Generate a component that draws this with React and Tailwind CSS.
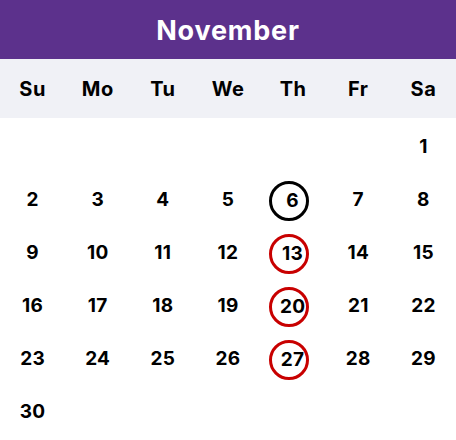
import React from 'react';

const days = ['Su', 'Mo', 'Tu', 'We', 'Th', 'Fr', 'Sa'];

const weeks = [
  [null, null, null, null, null, null, 1],
  [2, 3, 4, 5, 6, 7, 8],
  [9, 10, 11, 12, 13, 14, 15],
  [16, 17, 18, 19, 20, 21, 22],
  [23, 24, 25, 26, 27, 28, 29],
  [30, null, null, null, null, null, null],
];

const today = 6;
const marked = [13, 20, 27];

const DayCell = ({ day }) => {
  if (!day) return <div className="h-[53px]" />;

  if (day === today || marked.includes(day)) {
    const ring = day === today ? 'border-black' : 'border-[#c80000]';
    return (
      <div className="h-[53px] flex items-center justify-center">
        <div className={`w-[40px] h-[40px] -ml-[8px] rounded-full border-[3px] ${ring} flex items-center justify-center pl-[7px] pt-px`}>
          {day}
        </div>
      </div>
    );
  }

  return <div className="h-[53px] flex items-center justify-center">{day}</div>;
};

export default function App() {
  return (
    <div className="w-[456px] h-[440px] bg-white font-['Inter',sans-serif] font-bold text-black">
      {/* Month */}
      <div className="h-[59px] bg-[#5c318c] flex items-center justify-center pt-[4px]">
        <span className="text-white text-[27px] tracking-[0.8px]">November</span>
      </div>

      {/* Weekday names */}
      <div className="h-[59px] bg-[#f0f1f6] grid grid-cols-7 items-center">
        {days.map((d) => (
          <div key={d} className="text-center text-[20px] pt-[1px] tracking-[0.5px]">{d}</div>
        ))}
      </div>

      {/* Dates */}
      <div className="pt-[3px] text-[19px] tracking-[0.3px]">
        {weeks.map((week, i) => (
          <div key={i} className="grid grid-cols-7">
            {week.map((day, j) => (
              <DayCell key={j} day={day} />
            ))}
          </div>
        ))}
      </div>
    </div>
  );
}
